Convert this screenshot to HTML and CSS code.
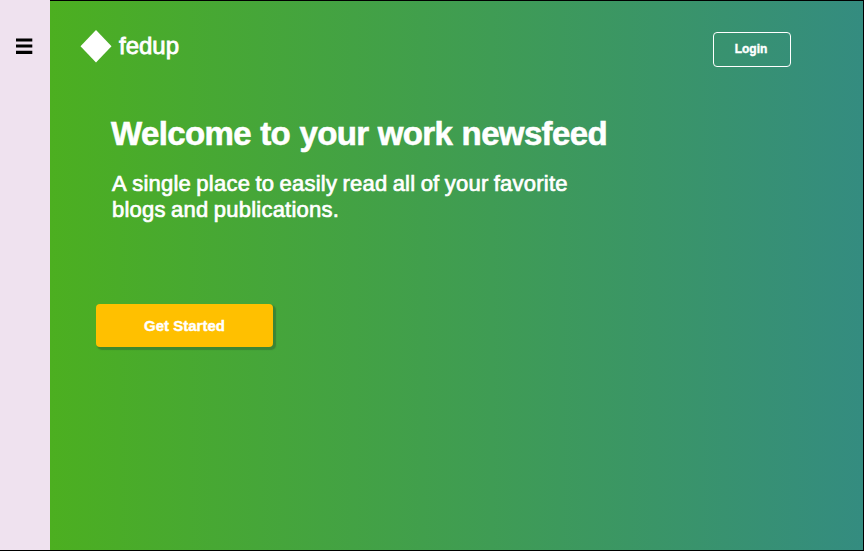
FILE: index.html
```html
<!DOCTYPE html>
<html lang="en">
<head>
<meta charset="utf-8">
<title>fedup</title>
<link rel="stylesheet" href="styles.css">
</head>
<body>
<div class="app">
  <aside class="sidebar">
    <button class="menu" aria-label="Menu"><svg width="17" height="16" viewBox="0 0 17 16"><path d="M0 .5h16.300v3.100H0zM0 6.500h16.300v3.100H0zM0 12.800h16.300v3.100H0z"/></svg></button>
  </aside>
  <main class="hero">
    <header class="topbar">
      <a class="brand"><svg class="logo" viewBox="0 0 32 34"><path d="M16 1 31.500 17.200 16 33.500 .5 17.200Z" fill="#fff"/></svg><span class="name">fedup</span></a>
      <button class="login">Login</button>
    </header>
    <section class="intro">
      <h1>Welcome to your work newsfeed</h1>
      <p>A single place to easily read all of your favorite<br>blogs and publications.</p>
    </section>
    <button class="cta">Get Started</button>
  </main>
</div>
</body>
</html>
```
FILE: styles.css
```css
* { box-sizing: border-box; }
body { margin: 0; font-family: "Liberation Sans", Arial, sans-serif; color: #fff; }
button { font-family: inherit; color: inherit; padding: 0; }
.app { display: flex; width: 864px; height: 551px; border-bottom: 1px solid #000; overflow: hidden; }
.sidebar { width: 50px; flex: none; background: #efe2ef; padding: 38px 0 0 16px; }
.menu { display: block; width: 17px; height: 16px; border: 0; background: none; }
.menu svg { display: block; fill: #000; }
.hero { flex: 1; border: solid #000; border-width: 1px 1px 0 0; background: linear-gradient(90deg, #4caf20, #348c80); }
.topbar { display: flex; justify-content: space-between; align-items: flex-start; padding: 28px 72px 0 30px; height: 110px; }
.brand { display: flex; align-items: center; gap: 7px; }
.logo { width: 32px; height: 34px; }
.name { font-size: 24px; -webkit-text-stroke: 0.8px #fff; }
.login { width: 78px; height: 35px; margin-top: 3px; padding: 0 2px 2px 0; border: 1px solid #fff; border-radius: 4px; background: none; font-size: 12px; font-weight: 700; -webkit-text-stroke: 0.4px #fff; }
.intro { height: 193px; padding: 3px 0 0 61px; }
h1 { margin: 0; font-size: 33px; line-height: 40px; letter-spacing: -0.63px; word-spacing: 0.8px; white-space: nowrap; -webkit-text-stroke: 0.6px #fff; }
p { margin: 17px 0 0 1px; font-size: 22px; line-height: 26px; letter-spacing: 0.24px; word-spacing: -1.1px; font-kerning: none; white-space: nowrap; -webkit-text-stroke: 0.7px #fff; }
.cta { display: block; margin-left: 46px; width: 177px; height: 43px; border: 0; border-radius: 4px; background: #ffc000; box-shadow: 2px 2px 1px 1px rgba(50,100,50,.5); font-size: 15px; font-weight: 700; -webkit-text-stroke: 0.4px #fff; }
```
